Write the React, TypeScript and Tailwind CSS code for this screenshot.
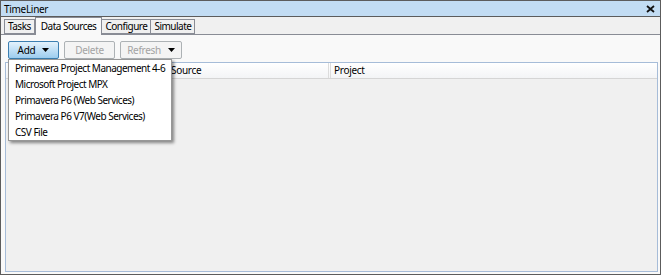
import React from "react";

const tabs = ["Tasks", "Data Sources", "Configure", "Simulate"];

const addItems = [
  "Primavera Project Management 4-6",
  "Microsoft Project MPX",
  "Primavera P6 (Web Services)",
  "Primavera P6 V7(Web Services)",
  "CSV File",
];

const Arrow = ({ color = "#000" }: { color?: string }) => (
  <svg width="7" height="4" viewBox="0 0 7 4" className="ml-[7px]">
    <polygon points="0,0 7,0 3.5,4" fill={color} />
  </svg>
);

const App = () => {
  return (
    <div
      className="w-[661px] h-[275px] border border-[#5c5c5c] bg-[#f0f0f0] flex flex-col text-[10px] tracking-[-0.3px] text-black overflow-hidden whitespace-nowrap"
      style={{ fontFamily: '"Noto Sans", "Open Sans", sans-serif' }}
    >
      {/* title bar */}
      <div className="h-[16px] bg-[#c2dcf3] border-b border-[#5c5c5c] flex items-center justify-between pl-[3px] pr-[5px] shrink-0">
        <span className="leading-none">TimeLiner</span>
        <svg width="9" height="8" viewBox="0 0 9 8">
          <path d="M1 1 L8 7 M8 1 L1 7" stroke="#111" strokeWidth="1.8" />
        </svg>
      </div>

      {/* tabs */}
      <div className="h-[17px] flex items-end pl-[3px] shrink-0 relative z-10 tracking-[-0.5px]">
        {tabs.map((t, i) =>
          i === 1 ? (
            <div
              key={t}
              className="h-[18px] -mb-px px-[5px] flex items-center bg-[#f9f9f9] border border-b-0 border-[#898c95]"
            >
              {t}
            </div>
          ) : (
            <div
              key={t}
              className="h-[15px] px-[3px] flex items-center bg-[#f0f0f0] border border-[#898c95] -ml-px first:ml-0"
            >
              {t}
            </div>
          )
        )}
      </div>

      {/* panel */}
      <div className="flex-1 border-t border-[#898c95] bg-[#f9f9f9] flex flex-col pl-[4px] pr-[2px] pb-[2px] relative">
        <div className="flex gap-[5px] pt-[6px] pl-[3px] h-[26px]">
          <div className="w-[51px] h-[18px] flex items-center justify-center rounded-[2px] border border-[#3c7fb1] bg-gradient-to-b from-[#e3f2fc] to-[#9dcdef]">
            Add
            <Arrow />
          </div>
          <div className="w-[51px] h-[18px] flex items-center justify-center rounded-[2px] border border-[#adb2b5] bg-[#f4f4f4] text-[#a3a3a3]">
            Delete
          </div>
          <div className="w-[62px] h-[18px] flex items-center justify-center rounded-[2px] border border-[#adb2b5] bg-[#f4f4f4] text-[#a3a3a3]">
            Refresh
            <Arrow color="#000" />
          </div>
        </div>

        {/* grid */}
        <div className="flex-1 mt-[1px] border border-[#a6bcd8] bg-[#f0f0f0] flex flex-col">
          <div className="h-[16px] bg-gradient-to-b from-[#ffffff] to-[#f3f4f6] border-b border-[#d5d5d5] flex">
            <div className="w-[162px] border-r-[3px] border-double border-[#dcdcdc] flex items-center pl-[4px]">
              Name
            </div>
            <div className="w-[163px] border-r-[3px] border-double border-[#dcdcdc] flex items-center pl-[3px]">
              Source
            </div>
            <div className="flex-1 flex items-center pl-[3px]">Project</div>
          </div>
        </div>

        {/* dropdown menu */}
        <div className="absolute left-[7px] top-[24px] w-[164px] bg-white border border-[#979797] shadow-[2px_2px_3px_rgba(0,0,0,0.45)] z-20 tracking-[-0.5px]">
          {addItems.map((item) => (
            <div key={item} className="h-[16px] flex items-center pl-[6px]">
              {item}
            </div>
          ))}
        </div>
      </div>
    </div>
  );
};

export default App;
